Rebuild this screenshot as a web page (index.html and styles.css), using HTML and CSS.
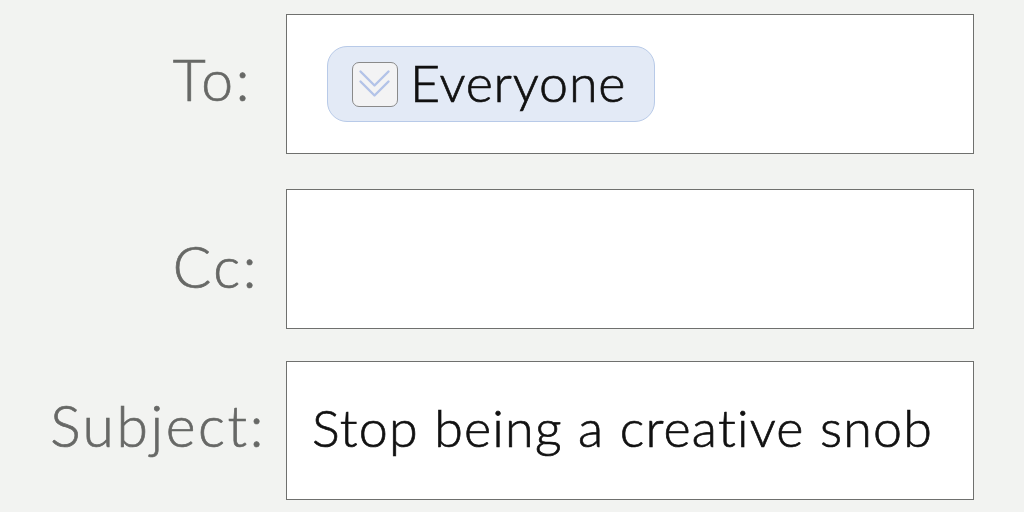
FILE: index.html
```html
<!DOCTYPE html>
<html>
<head>
<meta charset="utf-8">
<link rel="stylesheet" href="styles.css">
</head>
<body>
<div class="form">
  <div class="row row-to">
    <div class="label label-to">To:</div>
    <div class="field field-to">
      <span class="chip">
        <span class="chip-icon">
          <svg width="43" height="42" viewBox="1.5 1.5 43 42">
            <path d="M9 10 L23 24 L37 10" fill="none" stroke="#b3c3e8" stroke-width="2.4" stroke-linecap="round" stroke-linejoin="round"/>
            <path d="M9 20 L23 34 L37 20" fill="none" stroke="#b3c3e8" stroke-width="2.4" stroke-linecap="round" stroke-linejoin="round"/>
          </svg>
        </span>
        <span class="chip-text">Everyone</span>
      </span>
    </div>
  </div>
  <div class="row row-cc">
    <div class="label label-cc">Cc:</div>
    <div class="field"></div>
  </div>
  <div class="row row-subject">
    <div class="label label-subject">Subject:</div>
    <div class="field field-subject">Stop being a creative snob</div>
  </div>
</div>
</body>
</html>
```
FILE: styles.css
```css
html, body {
  margin: 0;
  padding: 0;
  background: #f2f3f1;
  font-family: "Lato", "Noto Sans", sans-serif;
}
.form {
  display: flex;
  flex-direction: column;
  padding-top: 14px;
}
.row {
  display: grid;
  grid-template-columns: 268px 688px;
  column-gap: 18px;
  align-items: center;
}
.row-cc {
  margin-top: 35px;
}
.row-subject {
  margin-top: 32px;
}
.label {
  text-align: right;
  color: #676866;
  font-size: 57px;
  font-weight: 300;
  letter-spacing: 2.6px;
  line-height: 1;
  -webkit-text-stroke: 0.7px #676866;
}
.label-to {
  padding-right: 16px;
  padding-bottom: 10px;
}
.label-cc {
  padding-right: 9px;
  padding-top: 14px;
}
.label-subject {
  padding-right: 2px;
  padding-bottom: 10px;
}
.field {
  box-sizing: border-box;
  height: 140px;
  background: #fff;
  border: 1.5px solid #6f706e;
  display: flex;
  align-items: center;
}
.field-to {
  padding-left: 40px;
}
.chip {
  display: flex;
  align-items: center;
  box-sizing: border-box;
  height: 76px;
  padding: 0 28px 0 24px;
  background: #e3eaf6;
  border: 1.5px solid #b8cae8;
  border-radius: 20px;
  gap: 12px;
}
.chip-icon {
  box-sizing: border-box;
  width: 46px;
  height: 45px;
  border: 1.5px solid #8a8a8a;
  border-radius: 7px;
  background: #f3f3f4;
  display: flex;
}
.chip-text {
  font-size: 52px;
  font-weight: 300;
  letter-spacing: 0.8px;
  color: #111;
  padding-bottom: 4px;
  -webkit-text-stroke: 0.7px #111;
}
.field-subject {
  height: 139px;
  padding-left: 25px;
  padding-bottom: 8px;
  font-size: 52px;
  font-weight: 300;
  letter-spacing: 1.2px;
  color: #111;
  -webkit-text-stroke: 0.7px #111;
}
```
